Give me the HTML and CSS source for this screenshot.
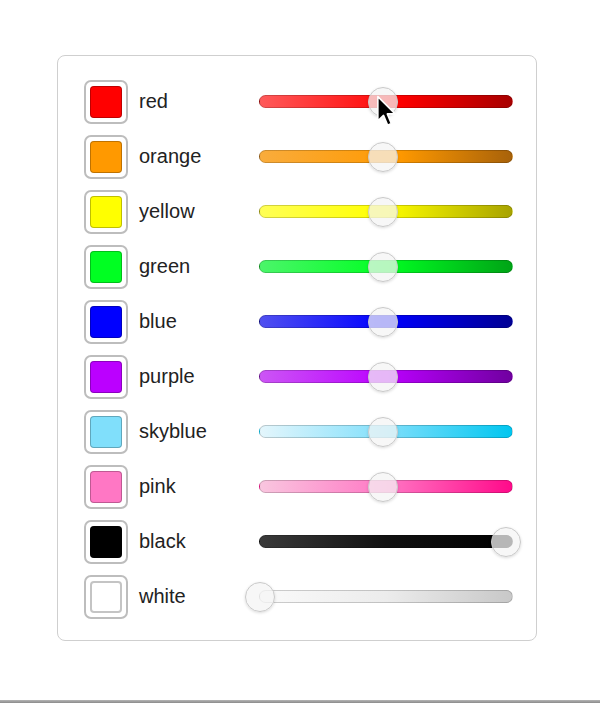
FILE: index.html
```html
<!DOCTYPE html>
<html>
<head>
<meta charset="utf-8">
<link rel="stylesheet" href="styles.css">
</head>
<body>
<div class="panel">
  <div class="row"><div class="swatch"><div class="chip c-red"></div></div><span class="label">red</span><div class="track t-red"><div class="thumb" style="left:108px"></div></div></div>
  <div class="row"><div class="swatch"><div class="chip c-orange"></div></div><span class="label">orange</span><div class="track t-orange"><div class="thumb" style="left:108px"></div></div></div>
  <div class="row"><div class="swatch"><div class="chip c-yellow"></div></div><span class="label">yellow</span><div class="track t-yellow"><div class="thumb" style="left:108px"></div></div></div>
  <div class="row"><div class="swatch"><div class="chip c-green"></div></div><span class="label">green</span><div class="track t-green"><div class="thumb" style="left:108px"></div></div></div>
  <div class="row"><div class="swatch"><div class="chip c-blue"></div></div><span class="label">blue</span><div class="track t-blue"><div class="thumb" style="left:108px"></div></div></div>
  <div class="row"><div class="swatch"><div class="chip c-purple"></div></div><span class="label">purple</span><div class="track t-purple"><div class="thumb" style="left:108px"></div></div></div>
  <div class="row"><div class="swatch"><div class="chip c-skyblue"></div></div><span class="label">skyblue</span><div class="track t-skyblue"><div class="thumb" style="left:108px"></div></div></div>
  <div class="row"><div class="swatch"><div class="chip c-pink"></div></div><span class="label">pink</span><div class="track t-pink"><div class="thumb" style="left:108px"></div></div></div>
  <div class="row"><div class="swatch"><div class="chip c-black"></div></div><span class="label">black</span><div class="track t-black"><div class="thumb" style="left:231px"></div></div></div>
  <div class="row"><div class="swatch"><div class="chip c-white"></div></div><span class="label">white</span><div class="track t-white"><div class="thumb" style="left:-15px"></div></div></div>
</div>
<div class="bottom-bar"></div>
<svg class="cursor" width="21" height="33" viewBox="0 0 13 21">
  <path d="M1 1 L1 16.5 L4.6 13 L7.2 19.2 L9.6 18.2 L7 12 L12 12 Z" fill="#000" stroke="#fff" stroke-width="1" stroke-linejoin="round"/>
</svg>
</body>
</html>
```

FILE: styles.css
```css
* { box-sizing: border-box; }
html, body { margin: 0; padding: 0; background: #fff; }
body {
  font-family: "Liberation Sans", Arial, sans-serif;
  position: relative;
  height: 703px;
  overflow: hidden;
}
.panel {
  margin: 55px 0 0 57px;
  width: 480px;
  height: 586px;
  border: 1px solid #cfcfcf;
  border-radius: 8px;
  padding: 18px 0 0 26px;
  display: flex;
  flex-direction: column;
}
.row {
  height: 55px;
  display: flex;
  align-items: center;
}
.swatch {
  width: 44px;
  height: 44px;
  border: 2px solid #bdbdbd;
  border-radius: 7px;
  padding: 4px;
  flex: none;
}
.chip {
  width: 32px;
  height: 32px;
  border-radius: 4px;
  box-shadow: inset 0 0 0 1px rgba(0,0,0,0.25);
}
.c-red { background: #ff0000; }
.c-orange { background: #ff9900; }
.c-yellow { background: #ffff00; }
.c-green { background: #00ff22; }
.c-blue { background: #0000ff; }
.c-purple { background: #bb00ff; }
.c-skyblue { background: #80dffb; }
.c-pink { background: #ff77c4; }
.c-black { background: #000; }
.c-white { background: #fff; box-shadow: inset 0 0 0 2px #c4c4c4; }
.label {
  margin-left: 11px;
  width: 120px;
  font-size: 20px;
  color: #222;
  flex: none;
}
.track {
  position: relative;
  width: 254px;
  height: 13px;
  border-radius: 7px;
  border: 1px solid rgba(0,0,0,0.18);
  flex: none;
}
.t-red { background: linear-gradient(to right, #ff5a5a, #ff0000 55%, #a80000); }
.t-orange { background: linear-gradient(to right, #f9ac3c, #ff9900 55%, #a8620a); }
.t-yellow { background: linear-gradient(to right, #ffff55, #ffff00 50%, #a8a300); }
.t-green { background: linear-gradient(to right, #4bf56a, #00ff22 50%, #00a416); }
.t-blue { background: linear-gradient(to right, #5050f0, #0000ff 50%, #000094); }
.t-purple { background: linear-gradient(to right, #cc55f5, #bb00ff 50%, #7000a0); }
.t-skyblue { background: linear-gradient(to right, #e4f6fc, #80dffb 50%, #00c6f0); }
.t-pink { background: linear-gradient(to right, #f9c6df, #ff77c4 50%, #ff0a8a); }
.t-black { background: linear-gradient(to right, #3a3a3a, #111 50%, #000); }
.t-white { background: linear-gradient(to right, #fafafa, #ececec 50%, #c8c8c8); }
.thumb {
  position: absolute;
  top: 50%;
  width: 30px;
  height: 30px;
  margin-top: -15px;
  border-radius: 50%;
  background: rgba(244,244,244,0.75);
  border: 1.5px solid #c9c9c9;
  box-shadow: 0 1px 3px rgba(0,0,0,0.15);
}
.bottom-bar {
  margin-top: 59px;
  height: 3px;
  background: linear-gradient(#b5b5b5, #8a8a8a);
}
.cursor {
  position: absolute;
  left: 376px;
  top: 95px;
}
```
